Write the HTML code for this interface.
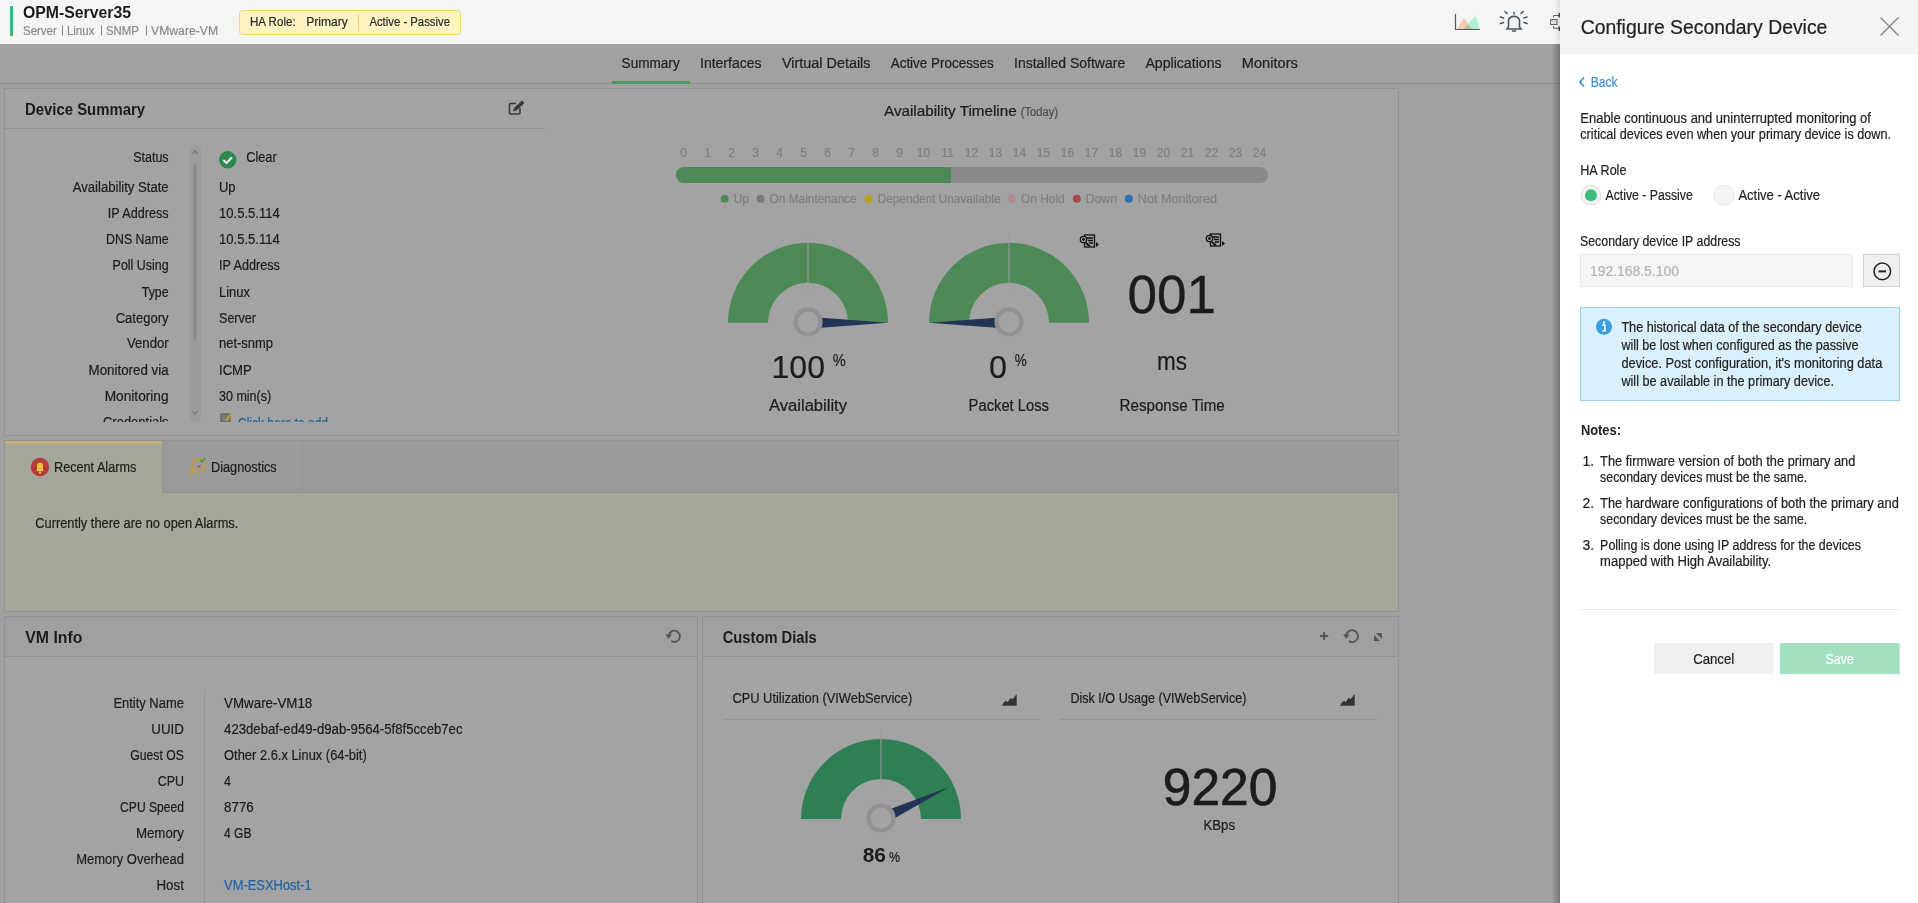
<!DOCTYPE html>
<html><head><meta charset="utf-8"><title>OPM-Server35 - Configure Secondary Device</title>
<style>
html,body{margin:0;padding:0;width:1918px;height:903px;overflow:hidden;background:#a1a1a1;}
svg{display:block;font-family:"Liberation Sans", sans-serif;will-change:transform;}
</style></head>
<body>
<svg width="1918" height="903" viewBox="0 0 1918 903">
<rect x="0" y="0" width="1918" height="903" fill="#a1a1a1"/>
<rect x="0" y="0" width="1918" height="44" fill="#f4f5f7"/>
<rect x="10" y="6" width="3" height="30" fill="#41b57a"/>
<text x="23.0" y="17.5" font-size="16" fill="#1a1a1a" font-weight="700" textLength="108.0" lengthAdjust="spacingAndGlyphs">OPM-Server35</text>
<text x="23.0" y="34.6" font-size="12.5" fill="#8a8a8a" textLength="33.8" lengthAdjust="spacingAndGlyphs" stroke="#8a8a8a" stroke-width="0.2">Server</text>
<line x1="62.5" y1="25.5" x2="62.5" y2="35.5" stroke="#8a8a8a" stroke-width="1.1"/>
<text x="66.9" y="34.6" font-size="12.5" fill="#8a8a8a" textLength="27.5" lengthAdjust="spacingAndGlyphs" stroke="#8a8a8a" stroke-width="0.2">Linux</text>
<line x1="101.5" y1="25.5" x2="101.5" y2="35.5" stroke="#8a8a8a" stroke-width="1.1"/>
<text x="106.0" y="34.6" font-size="12.5" fill="#8a8a8a" textLength="32.8" lengthAdjust="spacingAndGlyphs" stroke="#8a8a8a" stroke-width="0.2">SNMP</text>
<line x1="146.5" y1="25.5" x2="146.5" y2="35.5" stroke="#8a8a8a" stroke-width="1.1"/>
<text x="151.0" y="34.6" font-size="12.5" fill="#8a8a8a" textLength="67.1" lengthAdjust="spacingAndGlyphs" stroke="#8a8a8a" stroke-width="0.2">VMware-VM</text>
<rect x="239.5" y="10.5" width="221" height="24" fill="#fff3c2" stroke="#f2d66e" stroke-width="1" rx="3"/>
<text x="250.0" y="25.9" font-size="12" fill="#2b2b2b" textLength="45.6" lengthAdjust="spacingAndGlyphs" stroke="#2b2b2b" stroke-width="0.2">HA Role:</text>
<text x="306.3" y="25.9" font-size="12" fill="#2b2b2b" textLength="41.5" lengthAdjust="spacingAndGlyphs" stroke="#2b2b2b" stroke-width="0.2">Primary</text>
<line x1="358.5" y1="14.5" x2="358.5" y2="30.5" stroke="#f0d060" stroke-width="1"/>
<text x="369.4" y="25.9" font-size="12" fill="#2b2b2b" textLength="80.6" lengthAdjust="spacingAndGlyphs" stroke="#2b2b2b" stroke-width="0.2">Active - Passive</text>
<g><path d="M1455.5 14 V29.5 H1480" fill="none" stroke="#555" stroke-width="1.2"/><path d="M1457 29 L1464 18 L1472 29 Z" fill="#f6c3a8" opacity="0.9"/><path d="M1464 29 L1475.5 15.5 L1479.5 29 Z" fill="#a6f0cf" opacity="0.9"/><path d="M1464 29 L1468 24 L1472 29 Z" fill="#b5c9a0"/></g>
<g fill="none" stroke="#4f5660" stroke-width="1.6" stroke-linecap="round"><path d="M1507 29 H1521 L1519.5 27 V20 A6 6 0 0 0 1508.5 20 V27 Z"/><path d="M1514 12.5 V14"/><path d="M1512.5 31 H1515.5"/><path d="M1505 11.5 L1507 13.5"/><path d="M1523 11.5 L1521 13.5"/><path d="M1500.5 17 L1503.5 18"/><path d="M1527 17 L1524 18"/><path d="M1500.5 23.5 L1503.5 22.5"/><path d="M1527 23.5 L1524 22.5"/></g>
<g fill="none" stroke="#555" stroke-width="1"><rect x="1550.5" y="19.5" width="6.5" height="5" fill="#ddd" stroke="#666"/><path d="M1553.5 17.5 V15.5 H1559.3 M1553.5 26 V28.3 H1559.3" stroke="#666"/><path d="M1559.3 13 V17.5 M1559.3 26.5 V31" stroke="#444" stroke-width="1.4"/></g>
<line x1="0" y1="83.5" x2="1560" y2="83.5" stroke="#8f8f8f" stroke-width="1"/>
<text x="621.6" y="68.0" font-size="14" fill="#222" textLength="58.1" lengthAdjust="spacingAndGlyphs" stroke="#222" stroke-width="0.2">Summary</text>
<text x="700.0" y="68.0" font-size="14" fill="#222" textLength="61.5" lengthAdjust="spacingAndGlyphs" stroke="#222" stroke-width="0.2">Interfaces</text>
<text x="782.0" y="68.0" font-size="14" fill="#222" textLength="88.5" lengthAdjust="spacingAndGlyphs" stroke="#222" stroke-width="0.2">Virtual Details</text>
<text x="890.7" y="68.0" font-size="14" fill="#222" textLength="103.1" lengthAdjust="spacingAndGlyphs" stroke="#222" stroke-width="0.2">Active Processes</text>
<text x="1014.0" y="68.0" font-size="14" fill="#222" textLength="111.2" lengthAdjust="spacingAndGlyphs" stroke="#222" stroke-width="0.2">Installed Software</text>
<text x="1145.4" y="68.0" font-size="14" fill="#222" textLength="76.2" lengthAdjust="spacingAndGlyphs" stroke="#222" stroke-width="0.2">Applications</text>
<text x="1241.8" y="68.0" font-size="14" fill="#222" textLength="56.0" lengthAdjust="spacingAndGlyphs" stroke="#222" stroke-width="0.2">Monitors</text>
<rect x="612" y="81" width="78" height="3" fill="#4c9a5c"/>
<rect x="4.5" y="88.5" width="1394" height="347" fill="#a3a3a3" stroke="#939393" stroke-width="1"/>
<line x1="5" y1="128.5" x2="545" y2="128.5" stroke="#939393" stroke-width="1"/>
<text x="25.0" y="114.5" font-size="16" fill="#1c1c1c" font-weight="700" textLength="120.0" lengthAdjust="spacingAndGlyphs">Device Summary</text>
<g fill="none" stroke="#3a3a3a" stroke-width="1.6"><path d="M516 103.5 H510.5 Q509.5 103.5 509.5 104.5 V113 Q509.5 114 510.5 114 H519 Q520 114 520 113 V108"/></g><path d="M513 111.5 L514 108 L522 100.5 L524.5 103 L516.5 110.5 Z" fill="#3a3a3a"/>
<defs><clipPath id="dsclip"><rect x="0" y="140" width="560" height="282"/></clipPath></defs>
<g clip-path="url(#dsclip)">
<text x="168.6" y="162.0" font-size="14" fill="#1c1c1c" text-anchor="end" textLength="35.4" lengthAdjust="spacingAndGlyphs" stroke="#1c1c1c" stroke-width="0.2">Status</text>
<text x="168.6" y="191.9" font-size="14" fill="#1c1c1c" text-anchor="end" textLength="95.8" lengthAdjust="spacingAndGlyphs" stroke="#1c1c1c" stroke-width="0.2">Availability State</text>
<text x="168.6" y="218.0" font-size="14" fill="#1c1c1c" text-anchor="end" textLength="60.8" lengthAdjust="spacingAndGlyphs" stroke="#1c1c1c" stroke-width="0.2">IP Address</text>
<text x="168.6" y="244.4" font-size="14" fill="#1c1c1c" text-anchor="end" textLength="62.5" lengthAdjust="spacingAndGlyphs" stroke="#1c1c1c" stroke-width="0.2">DNS Name</text>
<text x="168.6" y="270.4" font-size="14" fill="#1c1c1c" text-anchor="end" textLength="56.0" lengthAdjust="spacingAndGlyphs" stroke="#1c1c1c" stroke-width="0.2">Poll Using</text>
<text x="168.6" y="296.6" font-size="14" fill="#1c1c1c" text-anchor="end" textLength="26.8" lengthAdjust="spacingAndGlyphs" stroke="#1c1c1c" stroke-width="0.2">Type</text>
<text x="168.6" y="322.6" font-size="14" fill="#1c1c1c" text-anchor="end" textLength="52.9" lengthAdjust="spacingAndGlyphs" stroke="#1c1c1c" stroke-width="0.2">Category</text>
<text x="168.6" y="348.4" font-size="14" fill="#1c1c1c" text-anchor="end" textLength="41.6" lengthAdjust="spacingAndGlyphs" stroke="#1c1c1c" stroke-width="0.2">Vendor</text>
<text x="168.6" y="374.6" font-size="14" fill="#1c1c1c" text-anchor="end" textLength="80.0" lengthAdjust="spacingAndGlyphs" stroke="#1c1c1c" stroke-width="0.2">Monitored via</text>
<text x="168.6" y="400.6" font-size="14" fill="#1c1c1c" text-anchor="end" textLength="63.9" lengthAdjust="spacingAndGlyphs" stroke="#1c1c1c" stroke-width="0.2">Monitoring</text>
<text x="168.6" y="426.6" font-size="14" fill="#1c1c1c" text-anchor="end" textLength="65.6" lengthAdjust="spacingAndGlyphs" stroke="#1c1c1c" stroke-width="0.2">Credentials</text>
<text x="219.0" y="191.9" font-size="14" fill="#1c1c1c" textLength="16.5" lengthAdjust="spacingAndGlyphs" stroke="#1c1c1c" stroke-width="0.2">Up</text>
<text x="219.0" y="218.0" font-size="14" fill="#1c1c1c" textLength="60.8" lengthAdjust="spacingAndGlyphs" stroke="#1c1c1c" stroke-width="0.2">10.5.5.114</text>
<text x="219.0" y="244.4" font-size="14" fill="#1c1c1c" textLength="60.8" lengthAdjust="spacingAndGlyphs" stroke="#1c1c1c" stroke-width="0.2">10.5.5.114</text>
<text x="219.0" y="270.4" font-size="14" fill="#1c1c1c" textLength="60.8" lengthAdjust="spacingAndGlyphs" stroke="#1c1c1c" stroke-width="0.2">IP Address</text>
<text x="219.0" y="296.6" font-size="14" fill="#1c1c1c" textLength="31.0" lengthAdjust="spacingAndGlyphs" stroke="#1c1c1c" stroke-width="0.2">Linux</text>
<text x="219.0" y="322.6" font-size="14" fill="#1c1c1c" textLength="37.0" lengthAdjust="spacingAndGlyphs" stroke="#1c1c1c" stroke-width="0.2">Server</text>
<text x="219.0" y="348.4" font-size="14" fill="#1c1c1c" textLength="54.0" lengthAdjust="spacingAndGlyphs" stroke="#1c1c1c" stroke-width="0.2">net-snmp</text>
<text x="219.0" y="374.6" font-size="14" fill="#1c1c1c" textLength="32.7" lengthAdjust="spacingAndGlyphs" stroke="#1c1c1c" stroke-width="0.2">ICMP</text>
<text x="219.0" y="400.6" font-size="14" fill="#1c1c1c" textLength="52.2" lengthAdjust="spacingAndGlyphs" stroke="#1c1c1c" stroke-width="0.2">30 min(s)</text>
<text x="246.2" y="162.0" font-size="14" fill="#1c1c1c" textLength="30.5" lengthAdjust="spacingAndGlyphs" stroke="#1c1c1c" stroke-width="0.2">Clear</text>
<rect x="221" y="414" width="9" height="8" fill="#7d7d7d" stroke="#555" stroke-width="1"/><path d="M226 421 L231 414" stroke="#c09a30" stroke-width="2.2"/>
<text x="238.0" y="428.0" font-size="14" fill="#1f5f9a" textLength="90.0" lengthAdjust="spacingAndGlyphs" stroke="#1f5f9a" stroke-width="0.2">Click here to add</text>
</g>
<circle cx="227.7" cy="159.8" r="8.7" fill="#2f8a50"/>
<path d="M223.3 160 L226.5 163 L232 157.2" fill="none" stroke="#e8e8e8" stroke-width="2.2"/>
<rect x="190" y="144.5" width="11" height="278" fill="#9c9c9c" rx="5.5"/>
<rect x="193" y="164" width="4" height="177" fill="#8d8d8d" rx="2"/>
<path d="M192.5 154 L195.2 151 L198 154" fill="none" stroke="#777" stroke-width="1.2"/>
<path d="M192.5 411 L195.2 414 L198 411" fill="none" stroke="#777" stroke-width="1.2"/>
<text x="884.0" y="115.8" font-size="15" fill="#1c1c1c" textLength="132.7" lengthAdjust="spacingAndGlyphs" stroke="#1c1c1c" stroke-width="0.2">Availability Timeline</text>
<text x="1020.7" y="115.8" font-size="12" fill="#4e4e4e" textLength="37.3" lengthAdjust="spacingAndGlyphs" stroke="#4e4e4e" stroke-width="0.2">(Today)</text>
<text x="683.5" y="157.0" font-size="12" fill="#7f7f7f" text-anchor="middle" stroke="#7f7f7f" stroke-width="0.2">0</text>
<text x="707.5" y="157.0" font-size="12" fill="#7f7f7f" text-anchor="middle" stroke="#7f7f7f" stroke-width="0.2">1</text>
<text x="731.5" y="157.0" font-size="12" fill="#7f7f7f" text-anchor="middle" stroke="#7f7f7f" stroke-width="0.2">2</text>
<text x="755.5" y="157.0" font-size="12" fill="#7f7f7f" text-anchor="middle" stroke="#7f7f7f" stroke-width="0.2">3</text>
<text x="779.5" y="157.0" font-size="12" fill="#7f7f7f" text-anchor="middle" stroke="#7f7f7f" stroke-width="0.2">4</text>
<text x="803.5" y="157.0" font-size="12" fill="#7f7f7f" text-anchor="middle" stroke="#7f7f7f" stroke-width="0.2">5</text>
<text x="827.5" y="157.0" font-size="12" fill="#7f7f7f" text-anchor="middle" stroke="#7f7f7f" stroke-width="0.2">6</text>
<text x="851.5" y="157.0" font-size="12" fill="#7f7f7f" text-anchor="middle" stroke="#7f7f7f" stroke-width="0.2">7</text>
<text x="875.5" y="157.0" font-size="12" fill="#7f7f7f" text-anchor="middle" stroke="#7f7f7f" stroke-width="0.2">8</text>
<text x="899.5" y="157.0" font-size="12" fill="#7f7f7f" text-anchor="middle" stroke="#7f7f7f" stroke-width="0.2">9</text>
<text x="923.5" y="157.0" font-size="12" fill="#7f7f7f" text-anchor="middle" stroke="#7f7f7f" stroke-width="0.2">10</text>
<text x="947.5" y="157.0" font-size="12" fill="#7f7f7f" text-anchor="middle" stroke="#7f7f7f" stroke-width="0.2">11</text>
<text x="971.5" y="157.0" font-size="12" fill="#7f7f7f" text-anchor="middle" stroke="#7f7f7f" stroke-width="0.2">12</text>
<text x="995.5" y="157.0" font-size="12" fill="#7f7f7f" text-anchor="middle" stroke="#7f7f7f" stroke-width="0.2">13</text>
<text x="1019.5" y="157.0" font-size="12" fill="#7f7f7f" text-anchor="middle" stroke="#7f7f7f" stroke-width="0.2">14</text>
<text x="1043.5" y="157.0" font-size="12" fill="#7f7f7f" text-anchor="middle" stroke="#7f7f7f" stroke-width="0.2">15</text>
<text x="1067.5" y="157.0" font-size="12" fill="#7f7f7f" text-anchor="middle" stroke="#7f7f7f" stroke-width="0.2">16</text>
<text x="1091.5" y="157.0" font-size="12" fill="#7f7f7f" text-anchor="middle" stroke="#7f7f7f" stroke-width="0.2">17</text>
<text x="1115.5" y="157.0" font-size="12" fill="#7f7f7f" text-anchor="middle" stroke="#7f7f7f" stroke-width="0.2">18</text>
<text x="1139.5" y="157.0" font-size="12" fill="#7f7f7f" text-anchor="middle" stroke="#7f7f7f" stroke-width="0.2">19</text>
<text x="1163.5" y="157.0" font-size="12" fill="#7f7f7f" text-anchor="middle" stroke="#7f7f7f" stroke-width="0.2">20</text>
<text x="1187.5" y="157.0" font-size="12" fill="#7f7f7f" text-anchor="middle" stroke="#7f7f7f" stroke-width="0.2">21</text>
<text x="1211.5" y="157.0" font-size="12" fill="#7f7f7f" text-anchor="middle" stroke="#7f7f7f" stroke-width="0.2">22</text>
<text x="1235.5" y="157.0" font-size="12" fill="#7f7f7f" text-anchor="middle" stroke="#7f7f7f" stroke-width="0.2">23</text>
<text x="1259.5" y="157.0" font-size="12" fill="#7f7f7f" text-anchor="middle" stroke="#7f7f7f" stroke-width="0.2">24</text>
<defs><clipPath id="barclip"><rect x="676" y="167" width="592" height="16" rx="8"/></clipPath></defs>
<g clip-path="url(#barclip)">
<rect x="676" y="167" width="592" height="16" fill="#8a8a8a"/>
<rect x="676" y="167" width="275" height="16" fill="#4e8a57"/>
</g>
<circle cx="724.7" cy="198.8" r="4" fill="#4e8a57"/>
<text x="733.7" y="203.0" font-size="12" fill="#7f7f7f" textLength="15.3" lengthAdjust="spacingAndGlyphs" stroke="#7f7f7f" stroke-width="0.2">Up</text>
<circle cx="760.6" cy="198.8" r="4" fill="#7a7a7a"/>
<text x="769.6" y="203.0" font-size="12" fill="#7f7f7f" textLength="87.0" lengthAdjust="spacingAndGlyphs" stroke="#7f7f7f" stroke-width="0.2">On Maintenance</text>
<circle cx="868.7" cy="198.8" r="4" fill="#b5a520"/>
<text x="877.7" y="203.0" font-size="12" fill="#7f7f7f" textLength="122.8" lengthAdjust="spacingAndGlyphs" stroke="#7f7f7f" stroke-width="0.2">Dependent Unavailable</text>
<circle cx="1011.7" cy="198.8" r="4" fill="#b08a8e"/>
<text x="1021.0" y="203.0" font-size="12" fill="#7f7f7f" textLength="43.7" lengthAdjust="spacingAndGlyphs" stroke="#7f7f7f" stroke-width="0.2">On Hold</text>
<circle cx="1076.8" cy="198.8" r="4" fill="#a84a4a"/>
<text x="1085.7" y="203.0" font-size="12" fill="#7f7f7f" textLength="31.3" lengthAdjust="spacingAndGlyphs" stroke="#7f7f7f" stroke-width="0.2">Down</text>
<circle cx="1128.8" cy="198.8" r="4" fill="#2d72b0"/>
<text x="1137.8" y="203.0" font-size="12" fill="#7f7f7f" textLength="79.2" lengthAdjust="spacingAndGlyphs" stroke="#7f7f7f" stroke-width="0.2">Not Monitored</text>
<path d="M728 322.8 A80 80 0 0 1 888 322.8 L848 322.8 A40 40 0 0 0 768 322.8 Z" fill="#4e8a57"/>
<line x1="808" y1="232.8" x2="808" y2="291.8" stroke="#9c9c9c" stroke-width="1"/>
<path d="M808.00 316.80 L888.00 322.80 L808.00 328.80 Z" fill="#223556"/>
<circle cx="808" cy="321.8" r="12.5" fill="#a3a3a3" stroke="#919191" stroke-width="4.2"/>
<path d="M929 322.8 A80 80 0 0 1 1089 322.8 L1049 322.8 A40 40 0 0 0 969 322.8 Z" fill="#4e8a57"/>
<line x1="1009" y1="232.8" x2="1009" y2="291.8" stroke="#9c9c9c" stroke-width="1"/>
<path d="M1009.00 328.80 L929.00 322.80 L1009.00 316.80 Z" fill="#223556"/>
<circle cx="1009" cy="321.8" r="12.5" fill="#a3a3a3" stroke="#919191" stroke-width="4.2"/>
<text x="771.5" y="377.7" font-size="32" fill="#1c1c1c" textLength="53.5" lengthAdjust="spacingAndGlyphs" stroke="#1c1c1c" stroke-width="0.2">100</text>
<text x="832.8" y="366.0" font-size="17" fill="#1c1c1c" textLength="13.0" lengthAdjust="spacingAndGlyphs" stroke="#1c1c1c" stroke-width="0.2">%</text>
<text x="769.0" y="411.0" font-size="16" fill="#1c1c1c" textLength="78.0" lengthAdjust="spacingAndGlyphs" stroke="#1c1c1c" stroke-width="0.2">Availability</text>
<text x="989.0" y="377.7" font-size="32" fill="#1c1c1c" textLength="18.0" lengthAdjust="spacingAndGlyphs" stroke="#1c1c1c" stroke-width="0.2">0</text>
<text x="1014.7" y="366.0" font-size="17" fill="#1c1c1c" textLength="12.0" lengthAdjust="spacingAndGlyphs" stroke="#1c1c1c" stroke-width="0.2">%</text>
<text x="968.6" y="411.0" font-size="16" fill="#1c1c1c" textLength="80.4" lengthAdjust="spacingAndGlyphs" stroke="#1c1c1c" stroke-width="0.2">Packet Loss</text>
<text x="1127.5" y="313.2" font-size="54" fill="#1c1c1c" textLength="88.5" lengthAdjust="spacingAndGlyphs" stroke="#1c1c1c" stroke-width="0.3">001</text>
<text x="1157.0" y="370.4" font-size="26" fill="#1c1c1c" textLength="30.0" lengthAdjust="spacingAndGlyphs" stroke="#1c1c1c" stroke-width="0.2">ms</text>
<text x="1119.6" y="411.0" font-size="16" fill="#1c1c1c" textLength="105.1" lengthAdjust="spacingAndGlyphs" stroke="#1c1c1c" stroke-width="0.2">Response Time</text>
<g fill="none" stroke="#111" stroke-width="1.3"><rect x="1084.5" y="235" width="10" height="12"/><path d="M1087 238 H1093 M1088 240.5 H1093 M1089 243 H1093"/><circle cx="1083.5" cy="239.5" r="3.2" fill="#a1a1a1"/><path d="M1083.5 238 V241 M1082 239.5 H1085"/><path d="M1086 243 L1090 246.5" stroke-width="2"/></g><path d="M1096 242 L1099 244.5 L1096 247 Z" fill="#111"/>
<g fill="none" stroke="#111" stroke-width="1.3"><rect x="1210.5" y="234" width="10" height="12"/><path d="M1213 237 H1219 M1214 239.5 H1219 M1215 242 H1219"/><circle cx="1209.5" cy="238.5" r="3.2" fill="#a1a1a1"/><path d="M1209.5 237 V240 M1208 238.5 H1211"/><path d="M1212 242 L1216 245.5" stroke-width="2"/></g><path d="M1222 241 L1225 243.5 L1222 246 Z" fill="#111"/>
<rect x="4.5" y="440.5" width="1394" height="171" fill="#a7a69a" stroke="#939393" stroke-width="1"/>
<rect x="162" y="441" width="1236" height="51" fill="#9b9b9b"/>
<line x1="162" y1="492.5" x2="1398" y2="492.5" stroke="#909090" stroke-width="1"/>
<line x1="162.5" y1="441" x2="162.5" y2="492" stroke="#949494" stroke-width="1"/>
<line x1="302.5" y1="441" x2="302.5" y2="492" stroke="#939393" stroke-width="1"/>
<rect x="5" y="441" width="157" height="3" fill="#c2b27a"/>
<circle cx="40" cy="467" r="9.2" fill="#b53a3a"/>
<path d="M36 471 L37 469.5 V465.5 A3 3 0 0 1 43 465.5 V469.5 L44 471 Z" fill="#e8c040"/><circle cx="40" cy="472.5" r="1.3" fill="#e8c040"/>
<text x="54.0" y="471.8" font-size="14" fill="#1c1c1c" textLength="82.3" lengthAdjust="spacingAndGlyphs" stroke="#1c1c1c" stroke-width="0.2">Recent Alarms</text>
<circle cx="198" cy="465.5" r="6.5" fill="none" stroke="#c89a3a" stroke-width="2"/><path d="M193.5 470 L189.5 474.5" stroke="#c89a3a" stroke-width="2.5"/><path d="M200 460 L202 462 L205 458" stroke="#3a9a4a" stroke-width="1.3" fill="none"/><path d="M197.5 465 L200.5 468 M200.5 465 L197.5 468" stroke="#c04040" stroke-width="1"/>
<text x="211.0" y="471.8" font-size="14" fill="#1c1c1c" textLength="65.7" lengthAdjust="spacingAndGlyphs" stroke="#1c1c1c" stroke-width="0.2">Diagnostics</text>
<text x="35.3" y="527.7" font-size="14" fill="#1c1c1c" textLength="203.0" lengthAdjust="spacingAndGlyphs" stroke="#1c1c1c" stroke-width="0.2">Currently there are no open Alarms.</text>
<rect x="4.5" y="616.5" width="693" height="300" fill="#a3a3a3" stroke="#939393" stroke-width="1"/>
<rect x="5" y="617" width="692" height="39" fill="#a0a0a0"/>
<line x1="5" y1="656.5" x2="697" y2="656.5" stroke="#939393" stroke-width="1"/>
<text x="25.3" y="643.0" font-size="16" fill="#1c1c1c" font-weight="700" textLength="57.2" lengthAdjust="spacingAndGlyphs">VM Info</text>
<path d="M668.70 635.80 A5.6 5.6 0 1 1 671.22 640.95" fill="none" stroke="#555" stroke-width="1.9"/>
<path d="M665.50 634.50 L671.90 634.50 L668.70 638.90 Z" fill="#555"/>
<line x1="204.5" y1="690" x2="204.5" y2="903" stroke="#959595" stroke-width="1"/>
<text x="183.9" y="708.0" font-size="14" fill="#1c1c1c" text-anchor="end" textLength="70.5" lengthAdjust="spacingAndGlyphs" stroke="#1c1c1c" stroke-width="0.2">Entity Name</text>
<text x="183.9" y="734.0" font-size="14" fill="#1c1c1c" text-anchor="end" textLength="32.6" lengthAdjust="spacingAndGlyphs" stroke="#1c1c1c" stroke-width="0.2">UUID</text>
<text x="183.9" y="760.0" font-size="14" fill="#1c1c1c" text-anchor="end" textLength="53.6" lengthAdjust="spacingAndGlyphs" stroke="#1c1c1c" stroke-width="0.2">Guest OS</text>
<text x="183.9" y="786.0" font-size="14" fill="#1c1c1c" text-anchor="end" textLength="26.2" lengthAdjust="spacingAndGlyphs" stroke="#1c1c1c" stroke-width="0.2">CPU</text>
<text x="183.9" y="812.0" font-size="14" fill="#1c1c1c" text-anchor="end" textLength="63.8" lengthAdjust="spacingAndGlyphs" stroke="#1c1c1c" stroke-width="0.2">CPU Speed</text>
<text x="183.9" y="838.0" font-size="14" fill="#1c1c1c" text-anchor="end" textLength="48.0" lengthAdjust="spacingAndGlyphs" stroke="#1c1c1c" stroke-width="0.2">Memory</text>
<text x="183.9" y="864.0" font-size="14" fill="#1c1c1c" text-anchor="end" textLength="107.7" lengthAdjust="spacingAndGlyphs" stroke="#1c1c1c" stroke-width="0.2">Memory Overhead</text>
<text x="183.9" y="890.0" font-size="14" fill="#1c1c1c" text-anchor="end" textLength="27.4" lengthAdjust="spacingAndGlyphs" stroke="#1c1c1c" stroke-width="0.2">Host</text>
<text x="224.1" y="708.0" font-size="14" fill="#1c1c1c" textLength="88.2" lengthAdjust="spacingAndGlyphs" stroke="#1c1c1c" stroke-width="0.2">VMware-VM18</text>
<text x="224.1" y="734.0" font-size="14" fill="#1c1c1c" textLength="238.4" lengthAdjust="spacingAndGlyphs" stroke="#1c1c1c" stroke-width="0.2">423debaf-ed49-d9ab-9564-5f8f5cceb7ec</text>
<text x="224.1" y="760.0" font-size="14" fill="#1c1c1c" textLength="142.6" lengthAdjust="spacingAndGlyphs" stroke="#1c1c1c" stroke-width="0.2">Other 2.6.x Linux (64-bit)</text>
<text x="224.1" y="786.0" font-size="14" fill="#1c1c1c" textLength="7.0" lengthAdjust="spacingAndGlyphs" stroke="#1c1c1c" stroke-width="0.2">4</text>
<text x="224.1" y="812.0" font-size="14" fill="#1c1c1c" textLength="29.7" lengthAdjust="spacingAndGlyphs" stroke="#1c1c1c" stroke-width="0.2">8776</text>
<text x="224.1" y="838.0" font-size="14" fill="#1c1c1c" textLength="27.4" lengthAdjust="spacingAndGlyphs" stroke="#1c1c1c" stroke-width="0.2">4 GB</text>
<text x="224.1" y="890.0" font-size="14" fill="#2163a6" textLength="87.5" lengthAdjust="spacingAndGlyphs" stroke="#2163a6" stroke-width="0.2">VM-ESXHost-1</text>
<rect x="702.5" y="616.5" width="696" height="300" fill="#a3a3a3" stroke="#939393" stroke-width="1"/>
<rect x="703" y="617" width="695" height="39" fill="#a0a0a0"/>
<line x1="703" y1="656.5" x2="1398" y2="656.5" stroke="#939393" stroke-width="1"/>
<text x="722.7" y="643.0" font-size="16" fill="#1c1c1c" font-weight="700" textLength="94.1" lengthAdjust="spacingAndGlyphs">Custom Dials</text>
<path d="M1324.1 632 V640 M1320 636 H1328.2" stroke="#555" stroke-width="1.9" fill="none"/>
<path d="M1346.20 635.70 A5.9 5.9 0 1 1 1348.86 641.10" fill="none" stroke="#555" stroke-width="1.9"/>
<path d="M1343.00 634.40 L1349.40 634.40 L1346.20 638.80 Z" fill="#555"/>
<path d="M1376 633 H1382 V639 Z M1374 635 V641 H1380 Z" fill="#555"/>
<line x1="722.7" y1="719.5" x2="1040" y2="719.5" stroke="#969696" stroke-width="1"/>
<line x1="1060" y1="719.5" x2="1378" y2="719.5" stroke="#969696" stroke-width="1"/>
<text x="732.4" y="702.6" font-size="14" fill="#1c1c1c" textLength="179.8" lengthAdjust="spacingAndGlyphs" stroke="#1c1c1c" stroke-width="0.2">CPU Utilization (VIWebService)</text>
<text x="1070.4" y="702.6" font-size="14" fill="#1c1c1c" textLength="176.0" lengthAdjust="spacingAndGlyphs" stroke="#1c1c1c" stroke-width="0.2">Disk I/O Usage (VIWebService)</text>
<path d="M1002 705.7 Q1004 701.5 1005.9 701 Q1007 701 1007.6 702.3 L1010.6 698.1 Q1011.8 698.6 1012.6 699.3 L1016.7 694 V705.7 Z" fill="#333"/>
<path d="M1340 705.7 Q1342 701.5 1343.9 701 Q1345 701 1345.6 702.3 L1348.6 698.1 Q1349.8 698.6 1350.6 699.3 L1354.7 694 V705.7 Z" fill="#333"/>
<path d="M801 819 A80 80 0 0 1 961 819 L921 819 A40 40 0 0 0 841 819 Z" fill="#2f7f55"/>
<line x1="881" y1="729" x2="881" y2="788" stroke="#9c9c9c" stroke-width="1"/>
<path d="M878.45 813.57 L949.77 786.64 L883.55 824.43 Z" fill="#223556"/>
<circle cx="881" cy="818" r="12.5" fill="#a3a3a3" stroke="#919191" stroke-width="4.2"/>
<text x="862.7" y="862.2" font-size="20" fill="#1c1c1c" font-weight="700" textLength="23.3" lengthAdjust="spacingAndGlyphs">86</text>
<text x="889.0" y="862.2" font-size="14" fill="#1c1c1c" textLength="11.0" lengthAdjust="spacingAndGlyphs" stroke="#1c1c1c" stroke-width="0.2">%</text>
<text x="1162.8" y="805.0" font-size="51" fill="#1c1c1c" textLength="114.5" lengthAdjust="spacingAndGlyphs" stroke="#1c1c1c" stroke-width="0.7">9220</text>
<text x="1203.5" y="830.3" font-size="14" fill="#1c1c1c" textLength="31.5" lengthAdjust="spacingAndGlyphs" stroke="#1c1c1c" stroke-width="0.2">KBps</text>
<defs><linearGradient id="shd" x1="0" x2="1"><stop offset="0" stop-color="#000" stop-opacity="0"/><stop offset="1" stop-color="#000" stop-opacity="0.28"/></linearGradient><linearGradient id="shd2" x1="0" x2="1"><stop offset="0" stop-color="#000" stop-opacity="0"/><stop offset="1" stop-color="#000" stop-opacity="0.09"/></linearGradient></defs>
<rect x="1552" y="44" width="8" height="859" fill="url(#shd)"/>
<rect x="1554" y="0" width="6" height="44" fill="url(#shd2)"/>
<rect x="1560" y="0" width="358" height="903" fill="#ffffff"/>
<rect x="1560" y="0" width="358" height="54" fill="#f4f4f4"/>
<text x="1580.7" y="34.2" font-size="20" fill="#222" textLength="246.7" lengthAdjust="spacingAndGlyphs" stroke="#222" stroke-width="0.2">Configure Secondary Device</text>
<path d="M1880.5 17.5 L1898.5 35.5 M1898.5 17.5 L1880.5 35.5" stroke="#8a8a8a" stroke-width="1.5"/>
<path d="M1584 77.5 L1580 82 L1584 86.5" fill="none" stroke="#3d8fd6" stroke-width="1.8"/>
<text x="1590.7" y="86.8" font-size="14" fill="#3d8fd6" textLength="26.9" lengthAdjust="spacingAndGlyphs" stroke="#3d8fd6" stroke-width="0.2">Back</text>
<text x="1580.3" y="123.0" font-size="14" fill="#222" textLength="290.6" lengthAdjust="spacingAndGlyphs" stroke="#222" stroke-width="0.2">Enable continuous and uninterrupted monitoring of</text>
<text x="1580.3" y="138.7" font-size="14" fill="#222" textLength="310.7" lengthAdjust="spacingAndGlyphs" stroke="#222" stroke-width="0.2">critical devices even when your primary device is down.</text>
<text x="1580.3" y="175.4" font-size="14" fill="#222" textLength="46.1" lengthAdjust="spacingAndGlyphs" stroke="#222" stroke-width="0.2">HA Role</text>
<circle cx="1591" cy="195.2" r="10" fill="#f2f2f2" stroke="#dedede" stroke-width="1"/>
<circle cx="1591" cy="195.2" r="6" fill="#3cbd78"/>
<text x="1605.5" y="200.2" font-size="14" fill="#222" textLength="87.2" lengthAdjust="spacingAndGlyphs" stroke="#222" stroke-width="0.2">Active - Passive</text>
<circle cx="1724" cy="195.2" r="10" fill="#f4f4f4" stroke="#e4e4e4" stroke-width="1"/>
<text x="1738.4" y="200.2" font-size="14" fill="#222" textLength="81.6" lengthAdjust="spacingAndGlyphs" stroke="#222" stroke-width="0.2">Active - Active</text>
<text x="1580.0" y="246.1" font-size="14" fill="#222" textLength="160.5" lengthAdjust="spacingAndGlyphs" stroke="#222" stroke-width="0.2">Secondary device IP address</text>
<rect x="1580.5" y="254.5" width="272" height="32" fill="#f5f5f5" stroke="#e8e8e8" stroke-width="1"/>
<text x="1589.9" y="276.0" font-size="14" fill="#b4b4b4" textLength="89.1" lengthAdjust="spacingAndGlyphs" stroke="#b4b4b4" stroke-width="0.2">192.168.5.100</text>
<rect x="1863.5" y="254.5" width="36" height="32" fill="#efefef" stroke="#d3d3d3" stroke-width="1"/>
<circle cx="1882.3" cy="271.4" r="8.3" fill="none" stroke="#222" stroke-width="1.5"/>
<path d="M1878.5 271.4 H1886" stroke="#222" stroke-width="2"/>
<rect x="1580.5" y="307.5" width="319" height="93" fill="#daf0fc" stroke="#9acded" stroke-width="1"/>
<circle cx="1604" cy="326.8" r="8" fill="#3a9de0"/>
<circle cx="1604" cy="322.5" r="1.3" fill="#fff"/><path d="M1602.3 325 H1604.8 V330.5 M1602.3 330.8 H1606" stroke="#fff" stroke-width="1.6" fill="none"/>
<text x="1621.4" y="332.0" font-size="14" fill="#222" textLength="240.3" lengthAdjust="spacingAndGlyphs" stroke="#222" stroke-width="0.2">The historical data of the secondary device</text>
<text x="1621.4" y="349.7" font-size="14" fill="#222" textLength="237.0" lengthAdjust="spacingAndGlyphs" stroke="#222" stroke-width="0.2">will be lost when configured as the passive</text>
<text x="1621.4" y="367.5" font-size="14" fill="#222" textLength="260.9" lengthAdjust="spacingAndGlyphs" stroke="#222" stroke-width="0.2">device. Post configuration, it's monitoring data</text>
<text x="1621.4" y="385.7" font-size="14" fill="#222" textLength="212.6" lengthAdjust="spacingAndGlyphs" stroke="#222" stroke-width="0.2">will be available in the primary device.</text>
<text x="1580.9" y="435.0" font-size="14" fill="#222" font-weight="700" textLength="40.1" lengthAdjust="spacingAndGlyphs">Notes:</text>
<text x="1582.5" y="466.2" font-size="14" fill="#222" stroke="#222" stroke-width="0.2">1.</text>
<text x="1600.1" y="466.2" font-size="14" fill="#222" textLength="255.3" lengthAdjust="spacingAndGlyphs" stroke="#222" stroke-width="0.2">The firmware version of both the primary and</text>
<text x="1600.1" y="482.0" font-size="14" fill="#222" textLength="207.2" lengthAdjust="spacingAndGlyphs" stroke="#222" stroke-width="0.2">secondary devices must be the same.</text>
<text x="1582.5" y="508.0" font-size="14" fill="#222" stroke="#222" stroke-width="0.2">2.</text>
<text x="1600.1" y="508.0" font-size="14" fill="#222" textLength="298.7" lengthAdjust="spacingAndGlyphs" stroke="#222" stroke-width="0.2">The hardware configurations of both the primary and</text>
<text x="1600.1" y="524.0" font-size="14" fill="#222" textLength="207.2" lengthAdjust="spacingAndGlyphs" stroke="#222" stroke-width="0.2">secondary devices must be the same.</text>
<text x="1582.5" y="550.3" font-size="14" fill="#222" stroke="#222" stroke-width="0.2">3.</text>
<text x="1600.1" y="550.3" font-size="14" fill="#222" textLength="260.9" lengthAdjust="spacingAndGlyphs" stroke="#222" stroke-width="0.2">Polling is done using IP address for the devices</text>
<text x="1600.1" y="566.0" font-size="14" fill="#222" textLength="171.0" lengthAdjust="spacingAndGlyphs" stroke="#222" stroke-width="0.2">mapped with High Availability.</text>
<line x1="1580" y1="609.5" x2="1900" y2="609.5" stroke="#e8e8e8" stroke-width="1"/>
<rect x="1654" y="643" width="119.5" height="31" fill="#efefef"/>
<text x="1713.7" y="664.3" font-size="14" fill="#222" text-anchor="middle" textLength="41.1" lengthAdjust="spacingAndGlyphs" stroke="#222" stroke-width="0.2">Cancel</text>
<rect x="1780" y="643" width="119.7" height="31" fill="#a3e0bf"/>
<text x="1839.7" y="664.3" font-size="14" fill="#ffffff" text-anchor="middle" textLength="28.3" lengthAdjust="spacingAndGlyphs" stroke="#ffffff" stroke-width="0.2">Save</text>
</svg>
</body></html>
